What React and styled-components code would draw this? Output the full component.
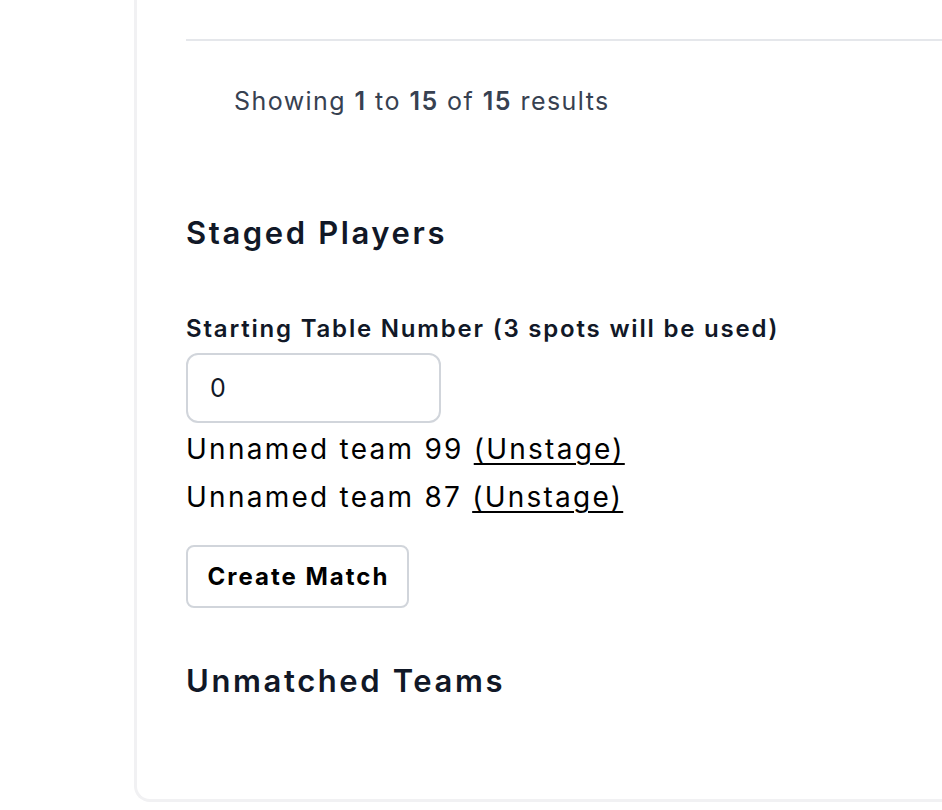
import React from "react";
import styled, { createGlobalStyle } from "styled-components";

const Global = createGlobalStyle`
  html, body { margin: 0; padding: 0; background: #ffffff; }
  body {
    font-family: Inter, "Noto Sans", "Liberation Sans", sans-serif;
    overflow: hidden;
  }
`;

const Page = styled.div`
  width: 942px;
  height: 810px;
  padding-left: 134px;
  box-sizing: border-box;
  overflow: hidden;
`;

const Card = styled.section`
  width: 900px;
  box-sizing: border-box;
  background: #ffffff;
  border: 3px solid #f1f1f3;
  border-top: none;
  border-right: none;
  border-radius: 0 0 0 16px;
  padding: 39px 0 98px 49px;
`;

const Results = styled.div`
  border-top: 2px solid #e5e7eb;
  padding: 42px 0 0 48px;
`;

const ResultsText = styled.p`
  margin: 0;
  font-size: 25px;
  line-height: 36px;
  letter-spacing: 1.45px;
  color: #374151;
  b { font-weight: 600; }
`;

const Heading = styled.h2`
  margin: ${(p) => p.$mt}px 0 0;
  font-size: 31px;
  line-height: 40px;
  letter-spacing: 2.6px;
  font-weight: 600;
  color: #111827;
`;

const Label = styled.label`
  display: block;
  margin-top: 61px;
  font-size: 24px;
  line-height: 30px;
  letter-spacing: 1.8px;
  font-weight: 600;
  color: #111827;
`;

const Input = styled.input`
  display: block;
  margin-top: 9px;
  width: 255px;
  height: 70px;
  box-sizing: border-box;
  border: 2px solid #d1d5db;
  border-radius: 12px;
  padding: 0 22px;
  font-family: inherit;
  font-size: 25px;
  color: #111827;
  background: #fff;
  outline: none;
`;

const TeamList = styled.div`
  margin-top: 2px;
`;

const TeamRow = styled.div`
  font-size: 28px;
  line-height: 48px;
  letter-spacing: 2.25px;
  color: #000;
`;

const Unstage = styled.a`
  color: #000;
  text-decoration: underline;
  text-decoration-thickness: 2px;
  text-underline-offset: 4px;
  cursor: pointer;
`;

const Button = styled.button`
  display: block;
  margin-top: 24px;
  width: 223px;
  height: 63px;
  box-sizing: border-box;
  border: 2px solid #d1d5db;
  border-radius: 8px;
  background: #fff;
  font-family: inherit;
  font-size: 24px;
  font-weight: 700;
  letter-spacing: 2px;
  color: #000;
  padding: 0 0 0 2px;
`;

const teams = ["Unnamed team 99", "Unnamed team 87"];

export default function App() {
  return (
    <>
      <Global />
      <Page>
        <Card>
          <Results>
            <ResultsText>
              Showing <b>1</b> to <b>15</b> of <b>15</b> results
            </ResultsText>
          </Results>
          <Heading $mt={94}>Staged Players</Heading>
          <Label htmlFor="start">Starting Table Number (3 spots will be used)</Label>
          <Input id="start" defaultValue="0" />
          <TeamList>
            {teams.map((t) => (
              <TeamRow key={t}>
                {t} <Unstage>(Unstage)</Unstage>
              </TeamRow>
            ))}
          </TeamList>
          <Button>Create Match</Button>
          <Heading $mt={53}>Unmatched Teams</Heading>
        </Card>
      </Page>
    </>
  );
}
